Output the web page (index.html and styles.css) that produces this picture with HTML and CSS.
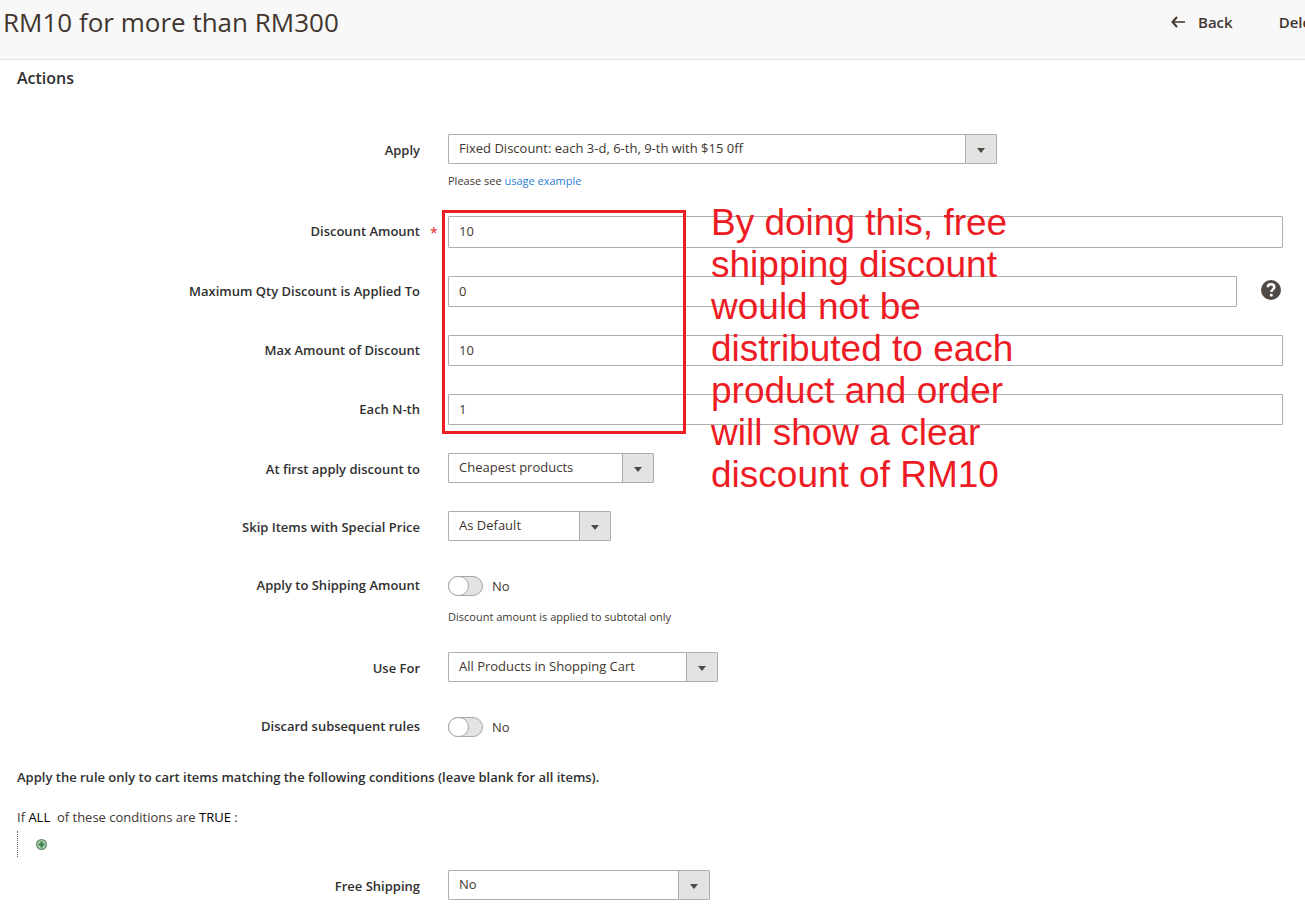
FILE: index.html
```html
<!DOCTYPE html>
<html lang="en">
<head>
<meta charset="utf-8">
<title>RM10 for more than RM300</title>
<link rel="stylesheet" href="styles.css">
</head>
<body>
<header class="page-header">
  <h1 class="page-title">RM10 for more than RM300</h1>
  <div class="page-actions">
    <button class="action" type="button">
      <svg class="action-icon" width="14" height="12" viewBox="0 0 14 12" fill="none" stroke="#41362f"><path d="M6 1 1.5 6 6 11" stroke-width="2"/><path d="M2 6h12" stroke-width="1.5"/></svg>
      Back
    </button>
    <button class="action" type="button">Delete</button>
  </div>
</header>
<main class="page-content">
  <h2 class="section-title">Actions</h2>
  <form class="form">
    <div class="field">
      <label class="label" for="apply">Apply</label>
      <div class="control">
        <div class="select select-xl"><select id="apply"><option>Fixed Discount: each 3-d, 6-th, 9-th with $15 0ff</option></select></div>
        <p class="note">Please see <a href="#usage">usage example</a></p>
      </div>
    </div>
    <div class="field-group">
      <div class="field">
        <label class="label required" for="amount">Discount Amount</label>
        <div class="control"><input class="text text-tall" id="amount" type="text" value="10" required></div>
      </div>
      <div class="field">
        <label class="label" for="qty">Maximum Qty Discount is Applied To</label>
        <div class="control with-help">
          <input class="text" id="qty" type="text" value="0">
          <button class="help" type="button" aria-label="Help"><svg width="20" height="20" viewBox="0 0 20 20"><circle cx="10" cy="10" r="10" fill="#514943"/><path d="M6.8 7.2C6.8 5.2 8.1 4.2 10 4.2s3.3 1.1 3.3 2.8c0 2.3-2.9 2.4-2.9 5.1" fill="none" stroke="#fff" stroke-width="2.5"/><rect x="8.9" y="13.8" width="2.8" height="2.7" rx="1" fill="#fff"/></svg></button>
        </div>
      </div>
      <div class="field">
        <label class="label" for="max">Max Amount of Discount</label>
        <div class="control"><input class="text" id="max" type="text" value="10"></div>
      </div>
      <div class="field">
        <label class="label" for="nth">Each N-th</label>
        <div class="control"><input class="text" id="nth" type="text" value="1"></div>
      </div>
      <div class="callout-frame"></div>
      <p class="callout-text">By doing this, free<br>shipping discount<br>would not be<br>distributed to each<br>product and order<br>will show a clear<br>discount of RM10</p>
    </div>
    <div class="field">
      <label class="label" for="first">At first apply discount to</label>
      <div class="control"><div class="select select-s"><select id="first"><option>Cheapest products</option></select></div></div>
    </div>
    <div class="field">
      <label class="label" for="skip">Skip Items with Special Price</label>
      <div class="control"><div class="select select-xs"><select id="skip"><option>As Default</option></select></div></div>
    </div>
    <div class="field">
      <label class="label" for="shipping">Apply to Shipping Amount</label>
      <div class="control">
        <div class="switch"><input id="shipping" type="checkbox"><span>No</span></div>
        <p class="note">Discount amount is applied to subtotal only</p>
      </div>
    </div>
    <div class="field">
      <label class="label" for="use">Use For</label>
      <div class="control"><div class="select select-l"><select id="use"><option>All Products in Shopping Cart</option></select></div></div>
    </div>
    <div class="field">
      <label class="label" for="discard">Discard subsequent rules</label>
      <div class="control"><div class="switch"><input id="discard" type="checkbox"><span>No</span></div></div>
    </div>
    <section class="conditions">
      <h3 class="conditions-title">Apply the rule only to cart items matching the following conditions (leave blank for all items).</h3>
      <p class="rule">If <a href="#all">ALL</a>&nbsp; of these conditions are <a href="#true">TRUE</a> :</p>
      <div class="rule-children">
        <button class="add" type="button" aria-label="Add condition"><svg width="11" height="11" viewBox="0 0 11 11"><circle cx="5.5" cy="5.5" r="4.9" fill="#b5d3b7" stroke="#5f8a66" stroke-width="1.2"/><path d="M5.5 2.5v6M2.5 5.5h6" stroke="#3b8148" stroke-width="2.2"/></svg></button>
      </div>
    </section>
    <div class="field">
      <label class="label" for="free">Free Shipping</label>
      <div class="control"><div class="select select-m"><select id="free"><option>No</option></select></div></div>
    </div>
  </form>
</main>
</body>
</html>
```
FILE: styles.css
```css
*, *::before, *::after { box-sizing: border-box; }
body {
  margin: 0;
  background: #fff;
  color: #41362f;
  font: 13px/18px "Open Sans", sans-serif;
}
h1, h2, h3, p { margin: 0; }
button { border: 0; padding: 0; background: none; font: inherit; color: inherit; }
a { color: #2b7fd3; text-decoration: none; }

.page-header {
  display: flex;
  height: 60px;
  padding: 4px 0 0 3px;
  background: #f8f8f8;
  border-bottom: 1px solid #e3e3e3;
}
.page-title { flex: 1; font-size: 26px; line-height: 36px; font-weight: 400; }
.page-actions {
  display: flex;
  align-items: flex-start;
  gap: 46px;
  width: 134px;
  overflow: hidden;
}
.action {
  display: flex;
  flex: none;
  align-items: center;
  gap: 13px;
  font-size: 15px;
  line-height: 36px;
  font-weight: 600;
}

.page-content { padding: 6px 22px 8px 17px; }
.section-title { font-size: 16px; line-height: 24px; font-weight: 600; color: #303030; }
.form { display: flex; flex-direction: column; gap: 28px; padding-top: 44px; }
.field-group { position: relative; display: flex; flex-direction: column; gap: 28px; }
.field { display: grid; grid-template-columns: 403px 1fr; column-gap: 28px; }
.label {
  position: relative;
  padding-top: 2px;
  line-height: 28px;
  font-weight: 600;
  text-align: right;
  color: #303030;
}
.field-group .label { padding-top: 1px; }
.required::after {
  content: "*";
  position: absolute;
  left: 100%;
  top: 3px;
  padding-left: 10px;
  color: #e22626;
  font-size: 14px;
  font-weight: 400;
}
.text {
  display: block;
  width: 100%;
  height: 31px;
  padding: 0 10px 2px;
  border: 1px solid #adadad;
  border-radius: 1px;
  background: #fff;
  color: #41362f;
  font: inherit;
}
.text-tall { height: 32px; }
.with-help { display: flex; align-items: flex-start; gap: 24px; padding-right: 2px; }
.help { flex: none; height: 20px; margin-top: 4px; }
.help svg, .add svg { display: block; }

.select { position: relative; max-width: 100%; height: 30px; }
.select-xl { width: 549px; }
.select-l { width: 270px; }
.select-m { width: 262px; }
.select-s { width: 206px; }
.select-xs { width: 163px; }
.select select {
  display: block;
  width: 100%;
  height: 30px;
  padding: 0 40px 2px 10px;
  border: 1px solid #adadad;
  border-radius: 1px;
  appearance: none;
  background: linear-gradient(#e3e3e3, #e3e3e3) right / 30px 100% no-repeat #fff;
  color: #41362f;
  font: inherit;
}
.select::before {
  content: "";
  position: absolute;
  top: 0;
  bottom: 0;
  right: 31px;
  width: 1px;
  background: #adadad;
}
.select::after {
  content: "";
  position: absolute;
  top: 14px;
  right: 12px;
  border: 4px solid transparent;
  border-top: 5px solid #514943;
  border-bottom: 0;
}

.note { margin-top: 10px; font-size: 11px; line-height: 14px; }
.switch { display: flex; align-items: center; gap: 9px; height: 31px; padding: 7px 0 4px; }
.switch input {
  position: relative;
  width: 35px;
  height: 20px;
  margin: 0;
  appearance: none;
  border: 1px solid #aaa6a0;
  border-radius: 10px;
  background: #e3e3e3;
}
.switch input::before {
  content: "";
  position: absolute;
  top: -1px;
  left: -1px;
  width: 21px;
  height: 20px;
  border: 1px solid #aaa6a0;
  border-radius: 10px;
  background: #fff;
}

.conditions { margin: -1px 0 -15px; }
.conditions-title { font-size: 13px; line-height: 18px; font-weight: 600; color: #303030; }
.rule { margin-top: 22px; }
.rule a { color: #000; }
.rule-children { margin-top: 5px; height: 26px; padding: 8px 0 0 18px; border-left: 1px dotted #666; }
.add { display: block; }

.callout-frame {
  position: absolute;
  top: -6px;
  left: 425px;
  width: 244px;
  height: 224px;
  border: 3px solid #ed1c24;
  pointer-events: none;
}
.callout-text {
  position: absolute;
  top: -14px;
  left: 694px;
  color: #ed1c24;
  font: 37px/42px "Liberation Sans", Arial, sans-serif;
  white-space: nowrap;
  pointer-events: none;
}
```
